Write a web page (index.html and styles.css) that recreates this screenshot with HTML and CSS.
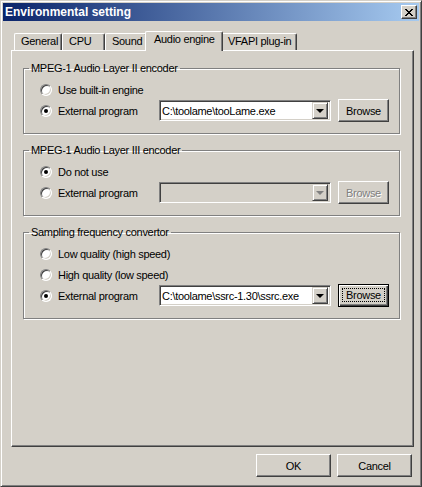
FILE: index.html
```html
<!DOCTYPE html>
<html lang="en">
<head>
    <meta charset="UTF-8">
    <title>Environmental setting</title>
    <link rel="stylesheet" href="styles.css">
</head>
<body>

    <div class="window">
        <!-- Title bar -->
        <div class="titlebar">
            <span class="title">Environmental setting</span>
            <button class="close">
                <svg width="8" height="7" viewBox="0 0 8 7">
                    <path d="M0 0h2v1H0z M6 0h2v1H6z M1 1h2v1H1z M5 1h2v1H5z M2 2h4v1H2z M3 3h2v1H3z M2 4h4v1H2z M1 5h2v1H1z M5 5h2v1H5z M0 6h2v1H0z M6 6h2v1H6z" fill="#000"/>
                </svg>
            </button>
        </div>

        <div class="client">
            <!-- Tabs -->
            <div class="tabs">
                <div class="tab tab-general">General</div>
                <div class="tab tab-cpu">CPU</div>
                <div class="tab tab-sound">Sound</div>
                <div class="tab tab-audio tab-active">Audio engine</div>
                <div class="tab tab-vfapi">VFAPI plug-in</div>
            </div>

            <div class="panel">
                <fieldset class="group">
                    <legend>MPEG-1 Audio Layer II encoder</legend>
                    <div class="row row-first">
                        <div class="option"><span class="radio"></span><span>Use built-in engine</span></div>
                    </div>
                    <div class="row">
                        <div class="option"><span class="radio checked"></span><span>External program</span></div>
                        <div class="combo">
                            <span class="combo-text">C:\toolame\tooLame.exe</span>
                            <span class="combo-arrow"><span class="triangle"></span></span>
                        </div>
                        <button class="btn">Browse</button>
                    </div>
                </fieldset>

                <fieldset class="group">
                    <legend>MPEG-1 Audio Layer III encoder</legend>
                    <div class="row row-first">
                        <div class="option"><span class="radio checked"></span><span>Do not use</span></div>
                    </div>
                    <div class="row">
                        <div class="option"><span class="radio"></span><span>External program</span></div>
                        <div class="combo combo-disabled">
                            <span class="combo-text"></span>
                            <span class="combo-arrow"><span class="triangle"></span></span>
                        </div>
                        <button class="btn btn-disabled">Browse</button>
                    </div>
                </fieldset>

                <fieldset class="group">
                    <legend>Sampling frequency convertor</legend>
                    <div class="row row-first">
                        <div class="option"><span class="radio"></span><span>Low quality (high speed)</span></div>
                    </div>
                    <div class="row">
                        <div class="option"><span class="radio"></span><span>High quality (low speed)</span></div>
                    </div>
                    <div class="row">
                        <div class="option"><span class="radio checked"></span><span>External program</span></div>
                        <div class="combo">
                            <span class="combo-text">C:\toolame\ssrc-1.30\ssrc.exe</span>
                            <span class="combo-arrow"><span class="triangle"></span></span>
                        </div>
                        <button class="btn btn-default"><span class="focus">Browse</span></button>
                    </div>
                </fieldset>
            </div>

            <!-- Dialog buttons -->
            <div class="actions">
                <button class="btn btn-wide">OK</button>
                <button class="btn btn-wide">Cancel</button>
            </div>
        </div>
    </div>

</body>
</html>
```

FILE: styles.css
```css
body {
    margin: 0;
    font-family: 'Liberation Sans', Arial, sans-serif;
    font-size: 11px;
    letter-spacing: -0.3px;
    color: #000;
    background: #D4D0C8;
}

.window {
    width: 422px;
    height: 487px;
    box-sizing: border-box;
    background: #D4D0C8;
    border: 1px solid;
    border-color: #D4D0C8 #404040 #404040 #D4D0C8;
    box-shadow: inset 1px 1px #fff, inset -1px -1px #808080;
    padding: 2px;
    display: flex;
    flex-direction: column;
}

/* Title bar */
.titlebar {
    height: 18px;
    background: linear-gradient(to right, #0A246A, #A6CAF0);
    display: flex;
    align-items: center;
    justify-content: space-between;
    padding: 0 2px;
    color: #fff;
    font-weight: bold;
    font-size: 12px;
    letter-spacing: 0;
}

.close {
    width: 16px;
    height: 14px;
    box-sizing: border-box;
    padding: 0;
    background: #D4D0C8;
    border: 1px solid;
    border-color: #fff #404040 #404040 #fff;
    box-shadow: inset -1px -1px #808080;
    display: flex;
    align-items: center;
    justify-content: center;
}

.client {
    padding: 10px 5px 0 8px;
}

/* Tabs */
.tabs {
    display: flex;
    align-items: flex-end;
    height: 19px;
    padding-left: 3px;
}

.tab {
    height: 17px;
    box-sizing: border-box;
    padding: 1px 0 0 6px;
    line-height: 13px;
    border-top: 1px solid #fff;
    border-left: 1px solid #fff;
    border-right: 1px solid #404040;
    box-shadow: inset -1px 0 #808080;
    border-radius: 2px 2px 0 0;
    background: #D4D0C8;
    white-space: nowrap;
    overflow: hidden;
}

.tab-general { width: 48px; }
.tab-cpu { width: 43px; }
.tab-sound { width: 42px; }
.tab-audio { width: 74px; }
.tab-vfapi { width: 76px; }

.tab-active {
    width: 78px;
    height: 20px;
    margin: 0 -2px -1px;
    padding-left: 8px;
    position: relative;
    z-index: 1;
}

/* Tab page */
.panel {
    height: 397px;
    box-sizing: border-box;
    border: 1px solid;
    border-color: #fff #404040 #404040 #fff;
    box-shadow: inset -1px -1px #808080;
    padding: 11px 13px 0 11px;
}

.group {
    margin: 0;
    min-width: 0;
    padding: 0 8px 12px 5px;
    border: 1px solid #808080;
    box-shadow: inset 1px 1px #fff, 1px 1px #fff;
}

.group + .group {
    margin-top: 10px;
}

.group legend {
    padding: 0 2px;
    line-height: 13px;
}

.row {
    display: flex;
    align-items: center;
    height: 21px;
    padding-left: 11px;
}

.row-first {
    margin-top: 4px;
}

.option {
    width: 119px;
    display: flex;
    align-items: center;
    gap: 6px;
    white-space: nowrap;
}

/* Radio buttons */
.radio {
    width: 12px;
    height: 12px;
    box-sizing: border-box;
    border: 1px solid;
    border-color: #808080 #fff #fff #808080;
    border-radius: 50%;
    background: #fff;
    box-shadow: inset 1px 1px #404040, inset -1px -1px #D4D0C8;
    display: flex;
    align-items: center;
    justify-content: center;
    flex: none;
}

.radio.checked::after {
    content: '';
    width: 4px;
    height: 4px;
    border-radius: 50%;
    background: #000;
}

/* Combo boxes */
.combo {
    width: 172px;
    height: 21px;
    box-sizing: border-box;
    margin-right: 7px;
    border: 1px solid;
    border-color: #808080 #fff #fff #808080;
    box-shadow: inset 1px 1px #404040, inset -1px -1px #D4D0C8;
    background: #fff;
    display: flex;
    align-items: center;
    padding: 0 2px 0 2px;
    flex: none;
}

.combo-text {
    flex: 1;
    white-space: nowrap;
    overflow: hidden;
}

.combo-arrow {
    width: 16px;
    height: 17px;
    box-sizing: border-box;
    border: 1px solid;
    border-color: #D4D0C8 #404040 #404040 #D4D0C8;
    box-shadow: inset 1px 1px #fff, inset -1px -1px #808080;
    background: #D4D0C8;
    display: flex;
    align-items: center;
    justify-content: center;
}

.triangle {
    width: 0;
    height: 0;
    border-left: 4px solid transparent;
    border-right: 4px solid transparent;
    border-top: 4px solid #000;
}

.combo-disabled {
    background: #D4D0C8;
}

.combo-disabled .triangle {
    border-top-color: #808080;
}

/* Push buttons */
.btn {
    width: 51px;
    height: 23px;
    box-sizing: border-box;
    padding: 0;
    font-family: inherit;
    font-size: 11px;
    letter-spacing: -0.3px;
    color: #000;
    background: #D4D0C8;
    border: 1px solid;
    border-color: #fff #404040 #404040 #fff;
    box-shadow: inset -1px -1px #808080;
    flex: none;
}

.btn-disabled {
    color: #808080;
    text-shadow: 1px 1px #fff;
}

.btn-default {
    border: 1px solid #000;
    box-shadow: inset 1px 1px #fff, inset -1px -1px #404040, inset -2px -2px #808080;
    display: flex;
    padding: 3px 3px 4px 3px;
}

.btn-default .focus {
    flex: 1;
    border: 1px dotted #000;
    display: flex;
    align-items: center;
    justify-content: center;
}

.btn-wide {
    width: 75px;
}

.actions {
    display: flex;
    justify-content: flex-end;
    gap: 6px;
    margin-top: 7px;
    padding-right: 2px;
}
```
